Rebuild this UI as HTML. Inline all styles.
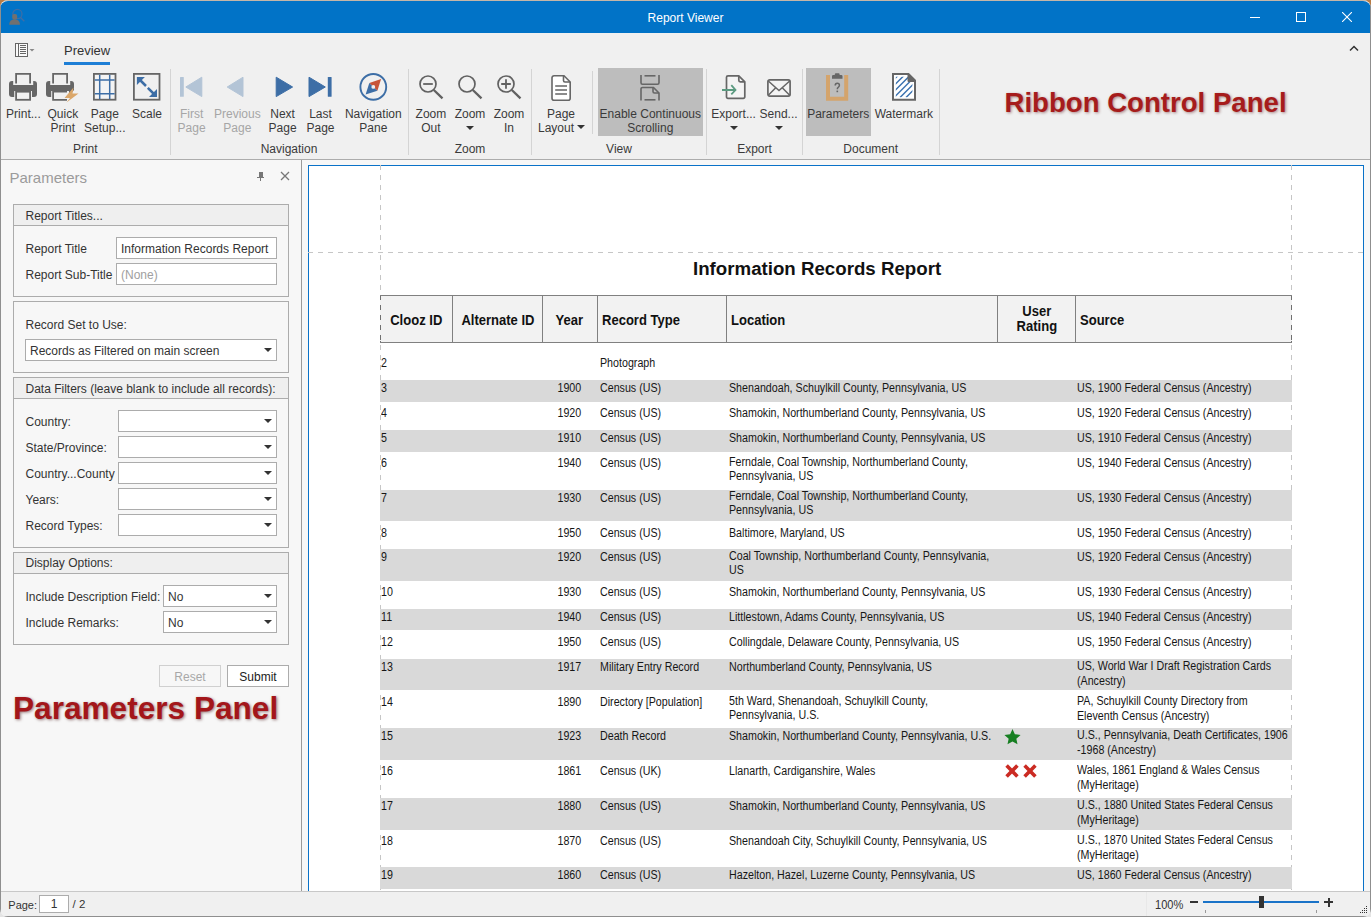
<!DOCTYPE html>
<html><head><meta charset="utf-8"><style>
*{box-sizing:border-box;margin:0;padding:0}
html,body{width:1371px;height:917px;overflow:hidden;background:linear-gradient(#b87c45 50%,#e4e4e4 50%);font-family:"Liberation Sans",sans-serif;}
.a{position:absolute;white-space:nowrap}
#win{position:absolute;left:0;top:0;width:1371px;height:917px;background:#f0f0f0;border-radius:8px;overflow:hidden}
#bb{position:absolute;left:0;top:916px;width:1371px;height:1px;background:#8f8f8f;z-index:9}
#bt{position:absolute;left:0;top:0;width:1371px;height:1px;background:#c4b6a8;z-index:9}
#bl{position:absolute;left:0;top:0;width:1px;height:917px;background:#8f8f8f;z-index:9}
#br{position:absolute;left:1370px;top:0;width:1px;height:917px;background:#8f8f8f;z-index:9}
#title{position:absolute;left:0;top:1px;width:1371px;height:32px;border-radius:8px 8px 0 0;background:#0173c7}
.ttl{color:#fff;font-size:12px}
.rl{position:absolute;font-size:12px;color:#3a3a3a;text-align:center;line-height:14px;white-space:nowrap}
.dis{color:#a6a6a6}
.gl{position:absolute;font-size:12px;color:#3a3a3a;white-space:nowrap;text-align:center}
.sep{position:absolute;width:1px;background:#d4d4d4}
#panel{position:absolute;left:1px;top:160px;width:300px;height:731px;background:#f7f7f7}
.grp{position:absolute;left:13px;width:276px;border:1px solid #acacac}
.gh{position:absolute;left:0;top:0;width:100%;height:21px;background:#efefef;border-bottom:1px solid #acacac}
.pl{position:absolute;font-size:12px;color:#333;white-space:nowrap}
.inp{position:absolute;background:#fff;border:1px solid #acacac;font-size:12px;color:#333;padding-left:4px;line-height:22px;white-space:nowrap}
.dd{position:absolute;right:4px;top:8px;width:0;height:0;border-left:4px solid transparent;border-right:4px solid transparent;border-top:4.5px solid #333}
#doc{position:absolute;left:302px;top:160px;width:1068px;height:731px;background:#f7f7f7;overflow:hidden}
.bt{position:absolute;font-size:12px;color:#161616;white-space:nowrap;line-height:14px;transform:scaleX(.89);transform-origin:0 0}
.hd{position:absolute;font-weight:bold;font-size:14px;color:#111;white-space:nowrap}
#status{position:absolute;left:0;top:891px;width:1371px;height:26px;background:#f0f0f0;border-top:1px solid #c8c8c8}
</style></head><body>
<div id="win">
<div id="doc"></div>
<div class="a" style="left:308px;top:165px;width:1056px;height:726px;background:#fff;border:1px solid #0a72c8;border-bottom:none"></div>
<div class="a" style="left:380px;top:165px;width:1px;height:726px;background:repeating-linear-gradient(to bottom,#c6c6c6 0,#c6c6c6 5px,transparent 5px,transparent 10px)"></div>
<div class="a" style="left:1291px;top:165px;width:1px;height:726px;background:repeating-linear-gradient(to bottom,#c6c6c6 0,#c6c6c6 5px,transparent 5px,transparent 10px)"></div>
<div class="a" style="left:308px;top:252px;width:1055px;height:1px;background:repeating-linear-gradient(to right,#c6c6c6 0,#c6c6c6 5px,transparent 5px,transparent 10px)"></div>
<div class="a" style="left:693px;top:259px;font-size:18.7px;line-height:20px;font-weight:bold;color:#111">Information Records Report</div>
<div class="a" style="left:380px;top:295px;width:912px;height:48px;background:#f2f2f2;border-top:1px solid #808080;border-bottom:1px solid #808080"></div>
<div class="a" style="left:380px;top:296px;width:1px;height:46px;background:repeating-linear-gradient(to bottom,#707070 0,#707070 5px,transparent 5px,transparent 10px);background-position:0 -1px"></div>
<div class="a" style="left:1291px;top:296px;width:1px;height:46px;background:repeating-linear-gradient(to bottom,#707070 0,#707070 5px,transparent 5px,transparent 10px);background-position:0 -1px"></div>
<div class="a" style="left:452.0px;top:295px;width:1px;height:48px;background:#808080"></div>
<div class="a" style="left:541.9px;top:295px;width:1px;height:48px;background:#808080"></div>
<div class="a" style="left:596.6px;top:295px;width:1px;height:48px;background:#808080"></div>
<div class="a" style="left:725.7px;top:295px;width:1px;height:48px;background:#808080"></div>
<div class="a" style="left:997.0px;top:295px;width:1px;height:48px;background:#808080"></div>
<div class="a" style="left:1074.7px;top:295px;width:1px;height:48px;background:#808080"></div>
<div class="hd" style="left:380px;width:72.5px;text-align:center;top:311.9px;font-size:14px;line-height:16px;transform:scaleX(.93);transform-origin:50% 0">Clooz ID</div>
<div class="hd" style="left:452.5px;width:89.89999999999998px;text-align:center;top:311.9px;font-size:14px;line-height:16px;transform:scaleX(.93);transform-origin:50% 0">Alternate ID</div>
<div class="hd" style="left:542.4px;width:54.700000000000045px;text-align:center;top:311.9px;font-size:14px;line-height:16px;transform:scaleX(.93);transform-origin:50% 0">Year</div>
<div class="hd" style="left:602.4px;top:311.9px;font-size:14px;line-height:16px;transform:scaleX(.93);transform-origin:0 0">Record Type</div>
<div class="hd" style="left:731.2px;top:311.9px;font-size:14px;line-height:16px;transform:scaleX(.93);transform-origin:0 0">Location</div>
<div class="hd" style="left:997.5px;width:77.70000000000005px;text-align:center;top:303.1px;font-size:14px;line-height:16px;transform:scaleX(.93);transform-origin:50% 0">User</div>
<div class="hd" style="left:997.5px;width:77.70000000000005px;text-align:center;top:318.3px;font-size:14px;line-height:16px;transform:scaleX(.93);transform-origin:50% 0">Rating</div>
<div class="hd" style="left:1080.4px;top:311.9px;font-size:14px;line-height:16px;transform:scaleX(.93);transform-origin:0 0">Source</div>
<div class="bt" style="left:381.3px;top:356.0px">2</div>
<div class="bt" style="left:600.2px;top:356.0px">Photograph</div>
<div class="a" style="left:380px;top:380px;width:911.6px;height:21.7px;background:#d9d9d9"></div>
<div class="bt" style="left:381.3px;top:381.0px">3</div>
<div class="bt" style="left:542.4px;width:54.7px;text-align:center;top:381.0px;transform-origin:50% 0">1900</div>
<div class="bt" style="left:600.2px;top:381.0px">Census (US)</div>
<div class="bt" style="left:729.2px;top:381.0px">Shenandoah, Schuylkill County, Pennsylvania, US</div>
<div class="bt" style="left:1077px;top:381.0px;line-height:14px">US, 1900 Federal Census (Ancestry)</div>
<div class="bt" style="left:381.3px;top:406.0px">4</div>
<div class="bt" style="left:542.4px;width:54.7px;text-align:center;top:406.0px;transform-origin:50% 0">1920</div>
<div class="bt" style="left:600.2px;top:406.0px">Census (US)</div>
<div class="bt" style="left:729.2px;top:406.0px">Shamokin, Northumberland County, Pennsylvania, US</div>
<div class="bt" style="left:1077px;top:406.0px;line-height:14px">US, 1920 Federal Census (Ancestry)</div>
<div class="a" style="left:380px;top:430px;width:911.6px;height:21.7px;background:#d9d9d9"></div>
<div class="bt" style="left:381.3px;top:431.0px">5</div>
<div class="bt" style="left:542.4px;width:54.7px;text-align:center;top:431.0px;transform-origin:50% 0">1910</div>
<div class="bt" style="left:600.2px;top:431.0px">Census (US)</div>
<div class="bt" style="left:729.2px;top:431.0px">Shamokin, Northumberland County, Pennsylvania, US</div>
<div class="bt" style="left:1077px;top:431.0px;line-height:14px">US, 1910 Federal Census (Ancestry)</div>
<div class="bt" style="left:381.3px;top:456.0px">6</div>
<div class="bt" style="left:542.4px;width:54.7px;text-align:center;top:456.0px;transform-origin:50% 0">1940</div>
<div class="bt" style="left:600.2px;top:456.0px">Census (US)</div>
<div class="bt" style="left:729.2px;top:454.8px">Ferndale, Coal Township, Northumberland County,<br>Pennsylvania, US</div>
<div class="bt" style="left:1077px;top:456.0px;line-height:14px">US, 1940 Federal Census (Ancestry)</div>
<div class="a" style="left:380px;top:489.5px;width:911.6px;height:31.7px;background:#d9d9d9"></div>
<div class="bt" style="left:381.3px;top:490.5px">7</div>
<div class="bt" style="left:542.4px;width:54.7px;text-align:center;top:490.5px;transform-origin:50% 0">1930</div>
<div class="bt" style="left:600.2px;top:490.5px">Census (US)</div>
<div class="bt" style="left:729.2px;top:489.3px">Ferndale, Coal Township, Northumberland County,<br>Pennsylvania, US</div>
<div class="bt" style="left:1077px;top:490.5px;line-height:14px">US, 1930 Federal Census (Ancestry)</div>
<div class="bt" style="left:381.3px;top:525.8px">8</div>
<div class="bt" style="left:542.4px;width:54.7px;text-align:center;top:525.8px;transform-origin:50% 0">1950</div>
<div class="bt" style="left:600.2px;top:525.8px">Census (US)</div>
<div class="bt" style="left:729.2px;top:525.8px">Baltimore, Maryland, US</div>
<div class="bt" style="left:1077px;top:525.8px;line-height:14px">US, 1950 Federal Census (Ancestry)</div>
<div class="a" style="left:380px;top:549.2px;width:911.6px;height:31.5px;background:#d9d9d9"></div>
<div class="bt" style="left:381.3px;top:550.2px">9</div>
<div class="bt" style="left:542.4px;width:54.7px;text-align:center;top:550.2px;transform-origin:50% 0">1920</div>
<div class="bt" style="left:600.2px;top:550.2px">Census (US)</div>
<div class="bt" style="left:729.2px;top:549.0px">Coal Township, Northumberland County, Pennsylvania,<br>US</div>
<div class="bt" style="left:1077px;top:550.2px;line-height:14px">US, 1920 Federal Census (Ancestry)</div>
<div class="bt" style="left:381.3px;top:585.0px">10</div>
<div class="bt" style="left:542.4px;width:54.7px;text-align:center;top:585.0px;transform-origin:50% 0">1930</div>
<div class="bt" style="left:600.2px;top:585.0px">Census (US)</div>
<div class="bt" style="left:729.2px;top:585.0px">Shamokin, Northumberland County, Pennsylvania, US</div>
<div class="bt" style="left:1077px;top:585.0px;line-height:14px">US, 1930 Federal Census (Ancestry)</div>
<div class="a" style="left:380px;top:608.8px;width:911.6px;height:21.7px;background:#d9d9d9"></div>
<div class="bt" style="left:381.3px;top:609.8px">11</div>
<div class="bt" style="left:542.4px;width:54.7px;text-align:center;top:609.8px;transform-origin:50% 0">1940</div>
<div class="bt" style="left:600.2px;top:609.8px">Census (US)</div>
<div class="bt" style="left:729.2px;top:609.8px">Littlestown, Adams County, Pennsylvania, US</div>
<div class="bt" style="left:1077px;top:609.8px;line-height:14px">US, 1940 Federal Census (Ancestry)</div>
<div class="bt" style="left:381.3px;top:634.8px">12</div>
<div class="bt" style="left:542.4px;width:54.7px;text-align:center;top:634.8px;transform-origin:50% 0">1950</div>
<div class="bt" style="left:600.2px;top:634.8px">Census (US)</div>
<div class="bt" style="left:729.2px;top:634.8px">Collingdale, Delaware County, Pennsylvania, US</div>
<div class="bt" style="left:1077px;top:634.8px;line-height:14px">US, 1950 Federal Census (Ancestry)</div>
<div class="a" style="left:380px;top:658.8px;width:911.6px;height:31.7px;background:#d9d9d9"></div>
<div class="bt" style="left:381.3px;top:659.8px">13</div>
<div class="bt" style="left:542.4px;width:54.7px;text-align:center;top:659.8px;transform-origin:50% 0">1917</div>
<div class="bt" style="left:600.2px;top:659.8px">Military Entry Record</div>
<div class="bt" style="left:729.2px;top:659.8px">Northumberland County, Pennsylvania, US</div>
<div class="bt" style="left:1077px;top:658.9px;line-height:15px">US, World War I Draft Registration Cards<br>(Ancestry)</div>
<div class="bt" style="left:381.3px;top:694.8px">14</div>
<div class="bt" style="left:542.4px;width:54.7px;text-align:center;top:694.8px;transform-origin:50% 0">1890</div>
<div class="bt" style="left:600.2px;top:694.8px">Directory [Population]</div>
<div class="bt" style="left:729.2px;top:693.6px">5th Ward, Shenandoah, Schuylkill County,<br>Pennsylvania, U.S.</div>
<div class="bt" style="left:1077px;top:693.9px;line-height:15px">PA, Schuylkill County Directory from<br>Eleventh Census (Ancestry)</div>
<div class="a" style="left:380px;top:728px;width:911.6px;height:31.7px;background:#d9d9d9"></div>
<div class="bt" style="left:381.3px;top:729.0px">15</div>
<div class="bt" style="left:542.4px;width:54.7px;text-align:center;top:729.0px;transform-origin:50% 0">1923</div>
<div class="bt" style="left:600.2px;top:729.0px">Death Record</div>
<div class="bt" style="left:729.2px;top:729.0px">Shamokin, Northumberland County, Pennsylvania, U.S.</div>
<div class="bt" style="left:1077px;top:728.1px;line-height:15px">U.S., Pennsylvania, Death Certificates, 1906<br>-1968 (Ancestry)</div>
<svg class="a" style="left:1004px;top:728.9px" width="17" height="17" viewBox="0 0 16.4 16.4"><path d="M8.20 0.00L10.49 5.04L16.00 5.67L11.91 9.41L13.02 14.83L8.20 12.10L3.38 14.83L4.49 9.41L0.40 5.67L5.91 5.04z" fill="#177f22"/></svg>
<div class="bt" style="left:381.3px;top:764.0px">16</div>
<div class="bt" style="left:542.4px;width:54.7px;text-align:center;top:764.0px;transform-origin:50% 0">1861</div>
<div class="bt" style="left:600.2px;top:764.0px">Census (UK)</div>
<div class="bt" style="left:729.2px;top:764.0px">Llanarth, Cardiganshire, Wales</div>
<div class="bt" style="left:1077px;top:763.1px;line-height:15px">Wales, 1861 England &amp; Wales Census<br>(MyHeritage)</div>
<svg class="a" style="left:1005.2px;top:764.3px" width="14" height="14" viewBox="0 0 14 14"><path d="M1.6 1.6L12.4 12.4M12.4 1.6L1.6 12.4" stroke="#cb2b23" stroke-width="3.6"/></svg>
<svg class="a" style="left:1022.5px;top:764.3px" width="14" height="14" viewBox="0 0 14 14"><path d="M1.6 1.6L12.4 12.4M12.4 1.6L1.6 12.4" stroke="#cb2b23" stroke-width="3.6"/></svg>
<div class="a" style="left:380px;top:798px;width:911.6px;height:31.7px;background:#d9d9d9"></div>
<div class="bt" style="left:381.3px;top:799.0px">17</div>
<div class="bt" style="left:542.4px;width:54.7px;text-align:center;top:799.0px;transform-origin:50% 0">1880</div>
<div class="bt" style="left:600.2px;top:799.0px">Census (US)</div>
<div class="bt" style="left:729.2px;top:799.0px">Shamokin, Northumberland County, Pennsylvania, US</div>
<div class="bt" style="left:1077px;top:798.1px;line-height:15px">U.S., 1880 United States Federal Census<br>(MyHeritage)</div>
<div class="bt" style="left:381.3px;top:834.0px">18</div>
<div class="bt" style="left:542.4px;width:54.7px;text-align:center;top:834.0px;transform-origin:50% 0">1870</div>
<div class="bt" style="left:600.2px;top:834.0px">Census (US)</div>
<div class="bt" style="left:729.2px;top:834.0px">Shenandoah City, Schuylkill County, Pennsylvania, US</div>
<div class="bt" style="left:1077px;top:833.1px;line-height:15px">U.S., 1870 United States Federal Census<br>(MyHeritage)</div>
<div class="a" style="left:380px;top:867.3px;width:911.6px;height:21.7px;background:#d9d9d9"></div>
<div class="bt" style="left:381.3px;top:868.3px">19</div>
<div class="bt" style="left:542.4px;width:54.7px;text-align:center;top:868.3px;transform-origin:50% 0">1860</div>
<div class="bt" style="left:600.2px;top:868.3px">Census (US)</div>
<div class="bt" style="left:729.2px;top:868.3px">Hazelton, Hazel, Luzerne County, Pennsylvania, US</div>
<div class="bt" style="left:1077px;top:868.3px;line-height:14px">US, 1860 Federal Census (Ancestry)</div>
<div id="panel"></div>
<div class="a" style="left:301px;top:160px;width:1px;height:731px;background:#9a9a9a"></div>
<div class="a" style="left:9.5px;top:169.2px;font-size:15px;line-height:17px;color:#9b9b9b;">Parameters</div>
<svg class="a" style="left:257px;top:172px" width="7" height="9" viewBox="0 0 7 9" shape-rendering="crispEdges"><rect x="1.5" y="0" width="4" height="5" fill="#777"/><rect x="0" y="5" width="7" height="1" fill="#777"/><rect x="3" y="6" width="1" height="3" fill="#777"/></svg>
<svg class="a" style="left:280px;top:171px" width="10" height="10"><path d="M1 1L9 9M9 1L1 9" stroke="#777" stroke-width="1.3"/></svg>
<div class="grp" style="top:204px;height:93px"></div>
<div class="a" style="left:14px;top:205px;width:274px;height:20px;background:#efefef"></div>
<div class="a" style="left:14px;top:225px;width:274px;height:1px;background:#acacac"></div>
<div class="a" style="left:25.5px;top:209.3px;font-size:12px;line-height:14px;color:#333;">Report Titles...</div>
<div class="a" style="left:25.5px;top:241.7px;font-size:12px;line-height:14px;color:#333;">Report Title</div>
<div class="inp" style="left:116px;top:237px;width:161px;height:22px;color:#333">Information Records Report
</div>
<div class="a" style="left:25.5px;top:267.8px;font-size:12px;line-height:14px;color:#333;">Report Sub-Title</div>
<div class="inp" style="left:116px;top:263px;width:161px;height:22px;color:#a0a0a0">(None)
</div>
<div class="grp" style="top:301px;height:72px"></div>
<div class="a" style="left:25.5px;top:317.5px;font-size:12px;line-height:14px;color:#333;">Record Set to Use:</div>
<div class="inp" style="left:25px;top:339px;width:252px;height:22px;color:#333">Records as Filtered on main screen
<div class="dd"></div>
</div>
<div class="grp" style="top:377px;height:171px"></div>
<div class="a" style="left:14px;top:378px;width:274px;height:20px;background:#efefef"></div>
<div class="a" style="left:14px;top:398px;width:274px;height:1px;background:#acacac"></div>
<div class="a" style="left:25.5px;top:381.6px;font-size:12px;line-height:14px;color:#333;">Data Filters (leave blank to include all records):</div>
<div class="a" style="left:25.5px;top:414.6px;font-size:12px;line-height:14px;color:#333;">Country:</div>
<div class="inp" style="left:118px;top:410px;width:159px;height:22px;color:#333">
<div class="dd"></div>
</div>
<div class="a" style="left:25.5px;top:440.6px;font-size:12px;line-height:14px;color:#333;">State/Province:</div>
<div class="inp" style="left:118px;top:436px;width:159px;height:22px;color:#333">
<div class="dd"></div>
</div>
<div class="a" style="left:25.5px;top:466.5px;font-size:12px;line-height:14px;color:#333;">Country...County</div>
<div class="inp" style="left:118px;top:462px;width:159px;height:22px;color:#333">
<div class="dd"></div>
</div>
<div class="a" style="left:25.5px;top:492.5px;font-size:12px;line-height:14px;color:#333;">Years:</div>
<div class="inp" style="left:118px;top:488px;width:159px;height:22px;color:#333">
<div class="dd"></div>
</div>
<div class="a" style="left:25.5px;top:518.5px;font-size:12px;line-height:14px;color:#333;">Record Types:</div>
<div class="inp" style="left:118px;top:514px;width:159px;height:22px;color:#333">
<div class="dd"></div>
</div>
<div class="grp" style="top:552px;height:93px"></div>
<div class="a" style="left:14px;top:553px;width:274px;height:20px;background:#efefef"></div>
<div class="a" style="left:14px;top:573px;width:274px;height:1px;background:#acacac"></div>
<div class="a" style="left:25.5px;top:556.4px;font-size:12px;line-height:14px;color:#333;">Display Options:</div>
<div class="a" style="left:25.5px;top:590.3px;font-size:12px;line-height:14px;color:#333;">Include Description Field:</div>
<div class="inp" style="left:163px;top:585px;width:114px;height:22px;color:#333">No
<div class="dd"></div>
</div>
<div class="a" style="left:25.5px;top:615.6px;font-size:12px;line-height:14px;color:#333;">Include Remarks:</div>
<div class="inp" style="left:163px;top:611px;width:114px;height:22px;color:#333">No
<div class="dd"></div>
</div>
<div class="a" style="left:159px;top:665px;width:62px;height:22px;border:1px solid #d0d0d0;background:#f7f7f7;color:#a8a8a8;font-size:12px;line-height:22px;text-align:center">Reset</div>
<div class="a" style="left:227px;top:665px;width:62px;height:22px;border:1px solid #acacac;background:#fff;color:#222;font-size:12px;line-height:22px;text-align:center">Submit</div>
<div class="a" style="left:13px;top:692px;font-size:31.6px;line-height:32px;font-weight:bold;color:#a3161a;text-shadow:1px 1px 3px rgba(60,0,0,.5)">Parameters Panel</div>
<div id="status"></div>
<div class="a" style="left:1146px;top:892px;width:1px;height:24px;background:#e8e8e8"></div>
<div class="a" style="left:8.3px;top:897.6px;font-size:11px;line-height:14px;color:#333;">Page:</div>
<div class="a" style="left:39px;top:895px;width:30px;height:18px;line-height:17px !important;background:#fff;border:1px solid #acacac;font-size:12px;line-height:16px;text-align:center;color:#333">1</div>
<div class="a" style="left:72.5px;top:897.4px;font-size:11.5px;line-height:14px;color:#333;">/ 2</div>
<div class="a" style="left:1154.5px;top:897.6px;font-size:12.3px;line-height:14px;color:#333;transform:scaleX(.9);transform-origin:0 0">100%</div>
<div class="a" style="left:1190px;top:901px;width:8px;height:2px;background:#333"></div>
<div class="a" style="left:1203px;top:901px;width:116px;height:2px;background:#1a73c8"></div>
<div class="a" style="left:1259px;top:896px;width:5px;height:12px;background:#333"></div>
<div class="a" style="left:1205px;top:910px;width:1px;height:3px;background:#999"></div>
<div class="a" style="left:1316px;top:910px;width:1px;height:3px;background:#999"></div>
<div class="a" style="left:1324px;top:901px;width:9px;height:2px;background:#333"></div>
<div class="a" style="left:1327.5px;top:897.5px;width:2px;height:9px;background:#333"></div>
<svg class="a" style="left:1360px;top:906px" width="8" height="8"><g fill="#333"><rect x="6" y="0" width="1" height="1"/><rect x="4" y="2" width="1" height="1"/><rect x="6" y="2" width="1" height="1"/><rect x="2" y="4" width="1" height="1"/><rect x="4" y="4" width="1" height="1"/><rect x="6" y="4" width="1" height="1"/><rect x="0" y="6" width="1" height="1"/><rect x="2" y="6" width="1" height="1"/><rect x="4" y="6" width="1" height="1"/><rect x="6" y="6" width="1" height="1"/></g></svg>
<div id="title">
<svg class="a" style="left:8px;top:7px" width="18" height="18" viewBox="0 0 18 18"><circle cx="9.4" cy="6" r="4.6" fill="none" stroke="#3f6ea6" stroke-width="1.2"/><line x1="12.5" y1="9.5" x2="16.3" y2="13.3" stroke="#3f6ea6" stroke-width="1.4"/><rect x="4.2" y="6.1" width="5" height="5.6" rx="2" fill="#707070"/><path d="M1.2 16.8Q1.2 11.5 6.7 11.5Q12 11.5 12 16.8z" fill="#707070"/></svg>
<div class="a ttl" style="left:0;width:1371px;text-align:center;top:9.7px;line-height:14px">Report Viewer</div>
<div class="a" style="left:1250px;top:16px;width:10px;height:1px;background:#fff"></div>
<div class="a" style="left:1296px;top:11px;width:10px;height:10px;border:1px solid #fff"></div>
<svg class="a" style="left:1342px;top:11px" width="10" height="10"><path d="M0 0L10 10M10 0L0 10" stroke="#fff" stroke-width="1.1"/></svg>
</div>
<svg class="a" style="left:15px;top:43px" width="21" height="14" viewBox="0 0 21 14"><g shape-rendering="crispEdges"><rect x="0.5" y="0.5" width="12" height="13" fill="#fafafa" stroke="#666"/><line x1="3.5" y1="0.5" x2="3.5" y2="13.5" stroke="#666"/><path d="M5 2.5h6M5 4.5h6M5 6.5h6M5 8.5h6M5 10.5h6" stroke="#666" stroke-width="1"/></g><path d="M14.5 6l2.5 2.5 2.5-2.5z" fill="#888"/></svg>
<div class="a" style="left:64px;top:43px;font-size:13px;color:#333">Preview</div>
<div class="a" style="left:64px;top:62px;width:46px;height:3px;background:#1e7fd6"></div>
<svg class="a" style="left:1349px;top:45px" width="10" height="7"><path d="M1 5.5L5 1.5L9 5.5" fill="none" stroke="#333" stroke-width="1.5"/></svg>
<div class="a" style="left:598px;top:68px;width:105px;height:68px;background:#bdbdbd"></div>
<div class="a" style="left:806px;top:68px;width:65px;height:68px;background:#bdbdbd"></div>
<div class="sep" style="left:170px;top:69px;height:86px"></div>
<div class="sep" style="left:408px;top:69px;height:86px"></div>
<div class="sep" style="left:531px;top:69px;height:86px"></div>
<div class="sep" style="left:706px;top:69px;height:86px"></div>
<div class="sep" style="left:802px;top:69px;height:86px"></div>
<div class="sep" style="left:939px;top:69px;height:86px"></div>
<div class="sep" style="left:592px;top:71px;height:63px"></div>
<div class="rl " style="left:-36.6px;width:120px;top:107.2px">Print...</div>
<div class="rl " style="left:2.799999999999997px;width:120px;top:107.2px">Quick</div>
<div class="rl " style="left:2.799999999999997px;width:120px;top:121.2px">Print</div>
<div class="rl " style="left:44.8px;width:120px;top:107.2px">Page</div>
<div class="rl " style="left:44.8px;width:120px;top:121.2px">Setup...</div>
<div class="rl " style="left:87.0px;width:120px;top:107.2px">Scale</div>
<div class="rl dis" style="left:131.6px;width:120px;top:107.2px">First</div>
<div class="rl dis" style="left:131.6px;width:120px;top:121.2px">Page</div>
<div class="rl dis" style="left:177.3px;width:120px;top:107.2px">Previous</div>
<div class="rl dis" style="left:177.3px;width:120px;top:121.2px">Page</div>
<div class="rl " style="left:222.60000000000002px;width:120px;top:107.2px">Next</div>
<div class="rl " style="left:222.60000000000002px;width:120px;top:121.2px">Page</div>
<div class="rl " style="left:260.5px;width:120px;top:107.2px">Last</div>
<div class="rl " style="left:260.5px;width:120px;top:121.2px">Page</div>
<div class="rl " style="left:313.3px;width:120px;top:107.2px">Navigation</div>
<div class="rl " style="left:313.3px;width:120px;top:121.2px">Pane</div>
<div class="rl " style="left:370.9px;width:120px;top:107.2px">Zoom</div>
<div class="rl " style="left:370.9px;width:120px;top:121.2px">Out</div>
<div class="rl " style="left:410.0px;width:120px;top:107.2px">Zoom</div>
<div class="rl " style="left:449.0px;width:120px;top:107.2px">Zoom</div>
<div class="rl " style="left:449.0px;width:120px;top:121.2px">In</div>
<div class="rl " style="left:501.0px;width:120px;top:107.2px">Page</div>
<div class="rl" style="left:538px;top:121.2px;width:40px;text-align:left">Layout</div>
<div class="rl " style="left:590.3px;width:120px;top:107.2px">Enable Continuous</div>
<div class="rl " style="left:590.3px;width:120px;top:121.2px">Scrolling</div>
<div class="rl " style="left:673.6px;width:120px;top:107.2px">Export...</div>
<div class="rl " style="left:718.6px;width:120px;top:107.2px">Send...</div>
<div class="rl " style="left:778.2px;width:120px;top:107.2px">Parameters</div>
<div class="rl " style="left:843.8px;width:120px;top:107.2px">Watermark</div>
<div class="a" style="left:466px;top:125.5px;width:0;height:0;border-left:4px solid transparent;border-right:4px solid transparent;border-top:4px solid #333"></div>
<div class="a" style="left:576.5px;top:125px;width:0;height:0;border-left:4px solid transparent;border-right:4px solid transparent;border-top:4px solid #333"></div>
<div class="a" style="left:729.5px;top:125.5px;width:0;height:0;border-left:4px solid transparent;border-right:4px solid transparent;border-top:4px solid #333"></div>
<div class="a" style="left:774.5px;top:125.5px;width:0;height:0;border-left:4px solid transparent;border-right:4px solid transparent;border-top:4px solid #333"></div>
<div class="gl" style="left:25.299999999999997px;width:120px;top:142px">Print</div>
<div class="gl" style="left:229px;width:120px;top:142px">Navigation</div>
<div class="gl" style="left:410px;width:120px;top:142px">Zoom</div>
<div class="gl" style="left:559px;width:120px;top:142px">View</div>
<div class="gl" style="left:694.5px;width:120px;top:142px">Export</div>
<div class="gl" style="left:810.7px;width:120px;top:142px">Document</div>
<div class="a" style="left:0;top:159px;width:1371px;height:1px;background:#acacac"></div>
<svg class="a" style="left:9px;top:73px" width="28" height="28" viewBox="0 0 28 28">
<rect x="0" y="8" width="28" height="16" rx="3" fill="#666"/>
<rect x="4.2" y="7" width="20" height="5" fill="#f0f0f0"/>
<path d="M7.1 10.5V0.9H21.1V10.5" fill="none" stroke="#666" stroke-width="1.8"/>
<rect x="5.2" y="18" width="17.8" height="11" fill="#f0f0f0"/>
<rect x="7.1" y="18.7" width="14" height="8.1" fill="#f2f2f2" stroke="#666" stroke-width="1.8"/>
</svg>
<svg class="a" style="left:46px;top:73px" width="34" height="31" viewBox="0 0 34 31">
<path d="M3 8h22a3 3 0 0 1 3 3v6l-6 6.9H3a3 3 0 0 1-3-3V11a3 3 0 0 1 3-3z" fill="#666"/>
<rect x="4.2" y="7" width="20" height="5" fill="#f0f0f0"/>
<path d="M7.1 10.5V0.9H21.1V10.5" fill="none" stroke="#666" stroke-width="1.8"/>
<rect x="5.2" y="18" width="17.8" height="11" fill="#f0f0f0"/>
<path d="M21 26.8H7.1V18.7H21" fill="none" stroke="#666" stroke-width="1.8"/>
<path d="M27.5 14.5L18.5 25H24L20.5 29.5L32.5 20.5H26.5z" fill="#dba76a"/>
</svg>
<svg class="a" style="left:93px;top:73px" width="24" height="28" viewBox="0 0 24 28">
<rect x="0.9" y="0.9" width="21.6" height="25.8" fill="#f4f4f4" stroke="#666" stroke-width="1.8"/>
<path d="M6.7 1.8V26M16.7 1.8V26M1.8 7H21.6M1.8 20.8H21.6" stroke="#3d6ea6" stroke-width="1.5"/>
</svg>
<svg class="a" style="left:133px;top:73px" width="28" height="28" viewBox="0 0 28 28">
<rect x="0.9" y="0.9" width="25.6" height="25.8" fill="#f0f0f0" stroke="#666" stroke-width="1.8"/>
<path d="M3.9 3.9h8L3.9 11.9z" fill="#3d6ea6"/><path d="M24 24h-8L24 16z" fill="#3d6ea6"/>
<path d="M7 7L13 13M14.8 14.8L21 21" stroke="#3d6ea6" stroke-width="2.5"/>
</svg>
<svg class="a" style="left:179px;top:76px" width="160" height="22" viewBox="0 0 160 22">
<rect x="1" y="1" width="3.8" height="19.8" rx=".6" fill="#b3c4d6"/><path d="M22.8 1.2V20.6L6.8 11z" fill="#b3c4d6" stroke="#b3c4d6" stroke-width="1" stroke-linejoin="round"/>
<path d="M64 1.2V20.6L48.2 11z" fill="#b3c4d6" stroke="#b3c4d6" stroke-width="1" stroke-linejoin="round"/>
<path d="M97.2 1.2V20.6L113.6 11z" fill="#3d6ea6" stroke="#3d6ea6" stroke-width="1" stroke-linejoin="round"/>
<path d="M130 1.2V20.6L146.3 11z" fill="#3d6ea6" stroke="#3d6ea6" stroke-width="1" stroke-linejoin="round"/><rect x="148.8" y="1" width="3.8" height="19.8" rx=".6" fill="#3d6ea6"/>
</svg>
<svg class="a" style="left:359px;top:73px" width="29" height="28" viewBox="0 0 29 28">
<circle cx="14.3" cy="13.9" r="12.9" fill="none" stroke="#3d6ea6" stroke-width="1.9"/>
<path d="M22.1 6.1L10.3 10L14.3 13.9L18.4 17.8z" fill="#c8553a"/>
<path d="M6.6 21.6L10.3 10L14.3 13.9L18.4 17.8z" fill="#3d6ea6"/>
<circle cx="14.3" cy="13.9" r="1.9" fill="#f0f0f0"/>
</svg>
<svg class="a" style="left:419.3px;top:74px" width="26" height="26" viewBox="0 0 26 26">
<circle cx="9" cy="10" r="8" fill="none" stroke="#616161" stroke-width="1.7"/>
<path d="M14.8 16L23.5 24.3" stroke="#616161" stroke-width="2.3"/><path d="M4.2 10H13.8" stroke="#616161" stroke-width="1.8"/>
</svg>
<svg class="a" style="left:458.2px;top:74px" width="26" height="26" viewBox="0 0 26 26">
<circle cx="9" cy="10" r="8" fill="none" stroke="#616161" stroke-width="1.7"/>
<path d="M14.8 16L23.5 24.3" stroke="#616161" stroke-width="2.3"/>
</svg>
<svg class="a" style="left:497.1px;top:74px" width="26" height="26" viewBox="0 0 26 26">
<circle cx="9" cy="10" r="8" fill="none" stroke="#616161" stroke-width="1.7"/>
<path d="M14.8 16L23.5 24.3" stroke="#616161" stroke-width="2.3"/><path d="M4.2 10H13.8M9 5.2V14.8" stroke="#616161" stroke-width="1.8"/>
</svg>
<svg class="a" style="left:551px;top:75px" width="21" height="27" viewBox="0 0 21 27">
<path d="M3 0.8H13L19.2 7V23.2A2 2 0 0 1 17.2 25.2H3A2 2 0 0 1 1 23.2V2.8A2 2 0 0 1 3 0.8z" fill="#fff" stroke="#666" stroke-width="1.6"/>
<path d="M12.5 1V5.5A1.5 1.5 0 0 0 14 7H19" fill="none" stroke="#666" stroke-width="1.6"/>
<path d="M4.2 11H16M4.2 15H16M4.2 19H16" stroke="#666" stroke-width="1.6"/>
</svg>
<svg class="a" style="left:640px;top:74px" width="21" height="28" viewBox="0 0 21 28">
<path d="M1 1V8.8A1.5 1.5 0 0 0 2.5 10.3H17.5A1.5 1.5 0 0 0 19 8.8V1" fill="none" stroke="#666" stroke-width="1.6"/>
<path d="M4.5 1.8H15.5" stroke="#666" stroke-width="1.6"/>
<path d="M1 26.5V15A1.5 1.5 0 0 1 2.5 13.5H13.5L19 19V26.5" fill="none" stroke="#666" stroke-width="1.6"/>
<path d="M13 13.8V17.5A1.5 1.5 0 0 0 14.5 19H19" fill="none" stroke="#666" stroke-width="1.6"/>
<path d="M4.5 25.8H15.5" stroke="#666" stroke-width="1.6"/>
</svg>
<svg class="a" style="left:721px;top:74px" width="26" height="26" viewBox="0 0 26 26">
<path d="M7 1.8H17.8L23.8 7.8V22.8A1.5 1.5 0 0 1 22.3 24.3H7A1.5 1.5 0 0 1 5.5 22.8V3.3A1.5 1.5 0 0 1 7 1.8z" fill="#f4f4f4" stroke="#666" stroke-width="1.7"/>
<path d="M17.8 2V6.3A1.5 1.5 0 0 0 19.3 7.8H23.6" fill="none" stroke="#666" stroke-width="1.7"/>
<path d="M1 16H14M10.3 11.2L14.5 16L10.3 20.4" fill="none" stroke="#5b9a80" stroke-width="1.8"/>
</svg>
<svg class="a" style="left:766px;top:78px" width="26" height="20" viewBox="0 0 26 20">
<rect x="1.9" y="1.9" width="22.2" height="16.2" rx="1.8" fill="#f4f4f4" stroke="#666" stroke-width="1.7"/>
<path d="M2.3 3L13 12.5L23.7 3M2.3 17.3L9.5 10M23.7 17.3L16.5 10" fill="none" stroke="#666" stroke-width="1.5"/>
</svg>
<svg class="a" style="left:826px;top:73px" width="23" height="28" viewBox="0 0 23 28">
<path d="M2 2V25.8H20.2V2" fill="none" stroke="#d4a46c" stroke-width="4"/>
<path d="M6 5.8V3.3A1.2 1.2 0 0 1 7.2 2.1H8.8V1.2A1 1 0 0 1 9.8 0.2H12.6A1 1 0 0 1 13.6 1.2V2.1H15.3A1.2 1.2 0 0 1 16.5 3.3V5.8z" fill="#666"/>
<path d="M9.2 12.6Q9.2 10.3 11.3 10.3Q13.4 10.3 13.4 12.3Q13.4 13.6 12.2 14.3Q11.3 14.9 11.3 16.2" fill="none" stroke="#666" stroke-width="1.5"/><rect x="10.5" y="17.6" width="1.6" height="1.6" fill="#666"/>
</svg>
<svg class="a" style="left:892px;top:73px" width="25" height="28" viewBox="0 0 25 28">
<defs><clipPath id="wc"><path d="M3.8 3.8H16L20.4 8.2V24.2H3.8z"/></clipPath></defs>
<path d="M1 1H16.5L23 7.5V26.8H1z" fill="#fff" stroke="#666" stroke-width="2"/>
<g clip-path="url(#wc)" stroke="#3c73b0" stroke-width="1.5"><path d="M0 8.5L8 0.5M0 14.5L14 0.5M0 20.5L20 0.5M2 24.5L24 2.5M8 24.5L24 8.5M14 24.5L24 14.5"/></g>
<path d="M16 1L23.5 8.5H16z" fill="#666" stroke="#666" stroke-width="1"/>
</svg>
<div class="a" style="left:1004.5px;top:86.6px;font-size:27.6px;font-weight:bold;color:#a61c1c;text-shadow:1px 1px 3px rgba(80,0,0,.45)">Ribbon Control Panel</div>
<div id="bl"></div><div id="br"></div><div id="bb"></div><div id="bt"></div>
</div>
</body></html>
